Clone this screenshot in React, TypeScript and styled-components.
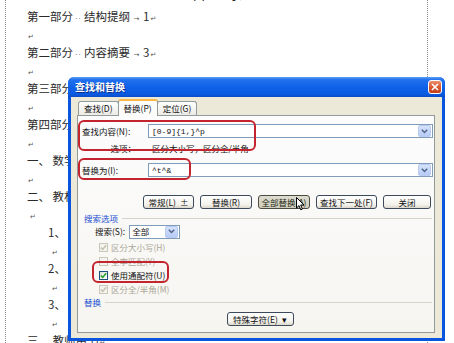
import React from 'react';
import styled, { createGlobalStyle, css } from 'styled-components';

const GlobalStyle = createGlobalStyle`
  html, body { margin: 0; padding: 0; background: #fff; }
  body { width: 454px; height: 343px; overflow: hidden; }
`;

const Screen = styled.div`
  position: relative;
  width: 454px;
  height: 343px;
  overflow: hidden;
  background: #fff;
`;

// the Word page behind the dialog
const Page = styled.div`
  margin-left: 5px;
  width: 423px;
  height: 343px;
  box-sizing: border-box;
  border-left: 1px dotted #8c8c8c;
  border-right: 1px dotted #8c8c8c;
  padding: 7px 0 0 21px;
  font-family: 'Noto Sans CJK SC', sans-serif;
  font-size: 11.5px;
  color: #2a2a2a;
`;

// heading of the page, only its lower edge is visible
const Heading = styled.div`
  height: 14px;
  line-height: 14px;
  margin: -21px 0 7px;
  padding-left: 165px;
  font-size: 14px;
  letter-spacing: 22px;
  color: #222;
`;

const Line = styled.div<{ $indent?: number }>`
  height: 18px;
  line-height: 18px;
  white-space: nowrap;
  padding-left: ${(p) => p.$indent || 0}px;
`;

const Para = styled.span`
  font-family: 'DejaVu Sans', sans-serif;
  font-size: 7px;
  color: #555;
  margin-left: 1px;
`;

const Dots = styled.span`
  display: inline-block;
  width: 11px;
  text-align: center;
  font-family: 'DejaVu Sans', sans-serif;
  font-size: 7px;
  color: #666;
  letter-spacing: 1px;
`;

const TabMark = styled.span`
  display: inline-block;
  width: 13px;
  text-align: center;
  font-family: 'DejaVu Sans', sans-serif;
  font-size: 7px;
  color: #555;
`;

// dialog window
const Window = styled.div`
  position: absolute;
  left: 68px;
  top: 77px;
  width: 377px;
  height: 264px;
  display: flex;
  flex-direction: column;
  background: #0a55de;
  border-radius: 6px 6px 0 0;
  font-family: 'Noto Sans CJK SC', sans-serif;
  font-size: 8.5px;
  color: #111;
`;

const TitleBar = styled.div`
  height: 20px;
  display: flex;
  align-items: center;
  padding: 0 3px 0 7px;
  border-radius: 6px 6px 0 0;
  background: linear-gradient(180deg, #5a9ff8 0%, #2170ee 14%, #0f62e8 50%, #0a5ae2 86%, #0a4cc6 100%);
`;

const Title = styled.span`
  flex: 1;
  color: #fff;
  font-weight: 700;
  font-size: 10px;
  line-height: 12px;
  text-shadow: 1px 1px 0 #0b2f8c;
`;

const CloseButton = styled.div`
  width: 14px;
  height: 14px;
  box-sizing: border-box;
  border: 1px solid #fff;
  border-radius: 3px;
  background: linear-gradient(180deg, #eb8f6f 0%, #d85a33 50%, #c23e19 100%);
  display: grid;
  place-items: center;
`;

const Body = styled.div`
  flex: 1;
  margin: 0 3px 3px;
  padding: 2px 7px 5px 6px;
  background: #ece9d8;
  display: flex;
  flex-direction: column;
`;

const TabRow = styled.div`
  height: 16px;
  display: flex;
  align-items: flex-end;
  padding-left: 1px;
  position: relative;
  z-index: 1;
`;

const Tab = styled.div<{ $active?: boolean }>`
  height: 14px;
  line-height: 13px;
  padding: 0 5px;
  box-sizing: border-box;
  border: 1px solid #919b9c;
  border-bottom: none;
  border-radius: 3px 3px 0 0;
  background: linear-gradient(180deg, #fefefe, #ecebe5);
  white-space: nowrap;
  ${(p) =>
    p.$active &&
    css`
      height: 17px;
      line-height: 15px;
      margin: 0 -1px -1px;
      padding: 0 5px;
      border-top: 2px solid #f9b845;
      background: #fbfbf9;
      position: relative;
    `}
`;

const Panel = styled.div`
  flex: 1;
  border: 1px solid #919b9c;
  background: linear-gradient(180deg, #fcfcfd 0%, #f6f5f0 100%);
  padding: 0 1px 0 4px;
  display: flex;
  flex-direction: column;
`;

const FieldRow = styled.div<{ $top: number }>`
  display: flex;
  align-items: center;
  height: 14px;
  margin-top: ${(p) => p.$top}px;
  white-space: nowrap;
`;

const FieldLabel = styled.span<{ $right?: boolean }>`
  width: 66px;
  flex: none;
  text-align: ${(p) => (p.$right ? 'right' : 'left')};
  padding-right: ${(p) => (p.$right ? 12 : 0)}px;
  box-sizing: border-box;
  line-height: 12px;
`;

const FieldValue = styled.span`
  padding-left: 4px;
  line-height: 12px;
`;

const Combo = styled.div<{ $w?: number }>`
  ${(p) => (p.$w ? `width: ${p.$w}px;` : 'flex: 1;')}
  height: 14px;
  box-sizing: border-box;
  border: 1px solid #7f9db9;
  background: #fff;
  display: flex;
  align-items: center;
`;

const ComboText = styled.span<{ $cjk?: boolean }>`
  flex: 1;
  padding-left: ${(p) => (p.$cjk ? 2 : 3)}px;
  font-family: ${(p) => (p.$cjk ? "'Noto Sans CJK SC', sans-serif" : "'Liberation Mono', monospace")};
  font-size: ${(p) => (p.$cjk ? 8.5 : 8)}px;
  line-height: 11px;
  color: #111;
`;

const DropButton = styled.div`
  width: 11px;
  height: 10px;
  margin-right: 1px;
  border-radius: 2px;
  background: linear-gradient(180deg, #d6e2fc, #b7cbf6);
  border: 1px solid #b9cbf3;
  display: grid;
  place-items: center;
`;

const ButtonRow = styled.div`
  display: flex;
  justify-content: flex-end;
  gap: 6px;
  margin-top: 18px;
  padding-right: 2px;
`;

const Button = styled.div<{ $w: number; $hot?: boolean }>`
  width: ${(p) => p.$w}px;
  height: 14px;
  box-sizing: border-box;
  border: 1px solid #3c4a5c;
  border-radius: 3px;
  background: linear-gradient(180deg, #ffffff 0%, #f3f2ec 70%, #dcd8cc 100%);
  display: flex;
  align-items: center;
  justify-content: center;
  gap: 4px;
  line-height: 11px;
  white-space: nowrap;
  ${(p) =>
    p.$hot &&
    css`
      background: linear-gradient(180deg, #dedcd0 0%, #cfccbc 100%);
      border-color: #4a4c40;
      color: #1c2a14;
    `}
`;

const GroupRow = styled.div<{ $top: number }>`
  display: flex;
  align-items: center;
  gap: 4px;
  height: 10px;
  line-height: 10px;
  margin-top: ${(p) => p.$top}px;
  padding-left: 2px;
  padding-right: 1px;
  color: #1c4fd0;
  &::after {
    content: '';
    flex: 1;
    height: 1px;
    background: #d7d5c9;
  }
`;

const SearchRow = styled.div`
  display: flex;
  align-items: center;
  gap: 4px;
  height: 13px;
  margin-top: 2px;
  padding-left: 13px;
  line-height: 11px;
`;

const CheckRow = styled.label<{ $disabled?: boolean; $first?: boolean }>`
  display: flex;
  align-items: center;
  gap: 3px;
  height: 14px;
  line-height: 11px;
  margin-top: ${(p) => (p.$first ? 2 : 0)}px;
  padding-left: 17px;
  color: ${(p) => (p.$disabled ? '#aca899' : '#111')};
`;

const CheckBox = styled.span<{ $disabled?: boolean }>`
  width: 9px;
  height: 9px;
  box-sizing: border-box;
  border: 1px solid ${(p) => (p.$disabled ? '#cac8bb' : '#1c5180')};
  background: ${(p) => (p.$disabled ? '#f4f3ee' : 'linear-gradient(135deg, #dcdcd5, #fff)')};
  display: grid;
  place-items: center;
`;

const SpecialRow = styled.div`
  display: flex;
  justify-content: center;
  margin-top: 5px;
  padding-left: 5px;
`;

const Annotation = styled.div<{ $x: number; $y: number; $w: number; $h: number }>`
  position: absolute;
  left: ${(p) => p.$x}px;
  top: ${(p) => p.$y}px;
  width: ${(p) => p.$w}px;
  height: ${(p) => p.$h}px;
  box-sizing: border-box;
  border: 2px solid #c4242d;
  border-radius: 6px;
  pointer-events: none;
`;

const Cursor = styled.svg`
  position: absolute;
  left: 296px;
  top: 197px;
`;

function Chevron() {
  return (
    <svg width="7" height="5" viewBox="0 0 7 5">
      <path d="M0.8 0.8 L3.5 3.6 L6.2 0.8" fill="none" stroke="#4d6185" strokeWidth="1.4" />
    </svg>
  );
}

function Check({ disabled }: { disabled?: boolean }) {
  return (
    <svg width="7" height="7" viewBox="0 0 7 7">
      <path d="M0.8 3.4 L2.7 5.4 L6.2 1.2" fill="none" stroke={disabled ? '#c3c1b3' : '#21a121'} strokeWidth="1.5" />
    </svg>
  );
}

const docLines: { text: React.ReactNode; indent?: number }[] = [
  { text: <>第一部分<Dots>··</Dots>结构提纲<TabMark>→</TabMark>1<Para>↵</Para></> },
  { text: <Para>↵</Para> },
  { text: <>第二部分<Dots>··</Dots>内容摘要<TabMark>→</TabMark>3<Para>↵</Para></> },
  { text: <Para>↵</Para> },
  { text: <>第三部分<Dots>··</Dots>教学建议<TabMark>→</TabMark>5<Para>↵</Para></> },
  { text: <Para>↵</Para> },
  { text: <>第四部分<Dots>··</Dots>评价建议<TabMark>→</TabMark>8<Para>↵</Para></> },
  { text: <Para>↵</Para> },
  { text: <>一、 数学课程标准<Para>↵</Para></> },
  { text: <Para>↵</Para> },
  { text: <>二、 教材分析<Para>↵</Para></> },
  { text: <Para>↵</Para>, indent: 2 },
  { text: <>1、 单元内容<Para>↵</Para></>, indent: 21 },
  { text: <Para>↵</Para>, indent: 24 },
  { text: <>2、 教学目标<Para>↵</Para></>, indent: 21 },
  { text: <Para>↵</Para>, indent: 24 },
  { text: <>3、 教学重点<Para>↵</Para></>, indent: 21 },
  { text: <Para>↵</Para>, indent: 24 },
  { text: <>三、 教师用书<Para>↵</Para></> },
];

export default function App() {
  return (
    <Screen>
      <GlobalStyle />
      <Page>
        <Heading>目录</Heading>
        {docLines.map((l, i) => (
          <Line key={i} $indent={l.indent}>
            {l.text}
          </Line>
        ))}
      </Page>

      <Window>
        <TitleBar>
          <Title>查找和替换</Title>
          <CloseButton>
            <svg width="8" height="8" viewBox="0 0 8 8">
              <path d="M1 1 L7 7 M7 1 L1 7" stroke="#fff" strokeWidth="1.6" />
            </svg>
          </CloseButton>
        </TitleBar>
        <Body>
          <TabRow>
            <Tab>查找(D)</Tab>
            <Tab $active>替换(P)</Tab>
            <Tab>定位(G)</Tab>
          </TabRow>
          <Panel>
            <FieldRow $top={8}>
              <FieldLabel>查找内容(N):</FieldLabel>
              <Combo>
                <ComboText>[0-9]{'{'}1,{'}'}^p</ComboText>
                <DropButton>
                  <Chevron />
                </DropButton>
              </Combo>
            </FieldRow>
            <FieldRow $top={3}>
              <FieldLabel $right>选项：</FieldLabel>
              <FieldValue>区分大小写，区分全/半角</FieldValue>
            </FieldRow>
            <FieldRow $top={8}>
              <FieldLabel>替换为(I):</FieldLabel>
              <Combo>
                <ComboText>^t^&amp;</ComboText>
                <DropButton>
                  <Chevron />
                </DropButton>
              </Combo>
            </FieldRow>
            <ButtonRow>
              <Button $w={51}>常规(L) <span>±</span></Button>
              <Button $w={52}>替换(R)</Button>
              <Button $w={52} $hot>全部替换(A)</Button>
              <Button $w={61}>查找下一处(F)</Button>
              <Button $w={48}>关闭</Button>
            </ButtonRow>
            <GroupRow $top={4}>搜索选项</GroupRow>
            <SearchRow>
              <span>搜索(S):</span>
              <Combo $w={51}>
                <ComboText $cjk>全部</ComboText>
                <DropButton>
                  <Chevron />
                </DropButton>
              </Combo>
            </SearchRow>
            <CheckRow $disabled $first>
              <CheckBox $disabled>
                <Check disabled />
              </CheckBox>
              区分大小写(H)
            </CheckRow>
            <CheckRow $disabled>
              <CheckBox $disabled />
              全字匹配(Y)
            </CheckRow>
            <CheckRow>
              <CheckBox>
                <Check />
              </CheckBox>
              使用通配符(U)
            </CheckRow>
            <CheckRow $disabled>
              <CheckBox $disabled>
                <Check disabled />
              </CheckBox>
              区分全/半角(M)
            </CheckRow>
            <GroupRow $top={1}>替换</GroupRow>
            <SpecialRow>
              <Button $w={67}>
                特殊字符(E) <span>▾</span>
              </Button>
            </SpecialRow>
          </Panel>
        </Body>
      </Window>

      <Annotation $x={78} $y={120} $w={178} $h={31} />
      <Annotation $x={78} $y={158} $w={113} $h={22} />
      <Annotation $x={92} $y={261} $w={77} $h={22} />

      <Cursor width="9" height="14" viewBox="0 0 9 14">
        <path d="M0.5 0.5 L0.5 11 L3 8.6 L4.8 12.8 L6.4 12.1 L4.7 8 L8 8 Z" fill="#fff" stroke="#000" strokeWidth="1" />
      </Cursor>
    </Screen>
  );
}
